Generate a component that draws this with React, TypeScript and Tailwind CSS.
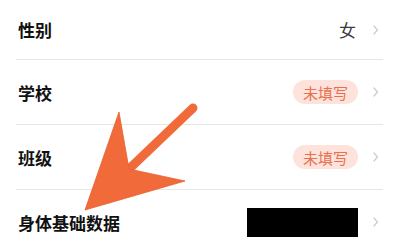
import React from "react";

const Chevron = () => (
  <svg width="6" height="10" viewBox="0 0 6 10" className="ml-[15px] shrink-0">
    <path d="M1 1 L4.5 5 L1 9" fill="none" stroke="#cccccc" strokeWidth="1.2" strokeLinecap="round" strokeLinejoin="round" />
  </svg>
);

const Badge = () => (
  <span className="flex h-[24px] w-[65px] items-center justify-center rounded-full bg-[#fde3db] text-[15px] leading-none text-[#e8704c]">
    未填写
  </span>
);

const Row = ({ label, right, h }: { label: string; right: React.ReactNode; h: string }) => (
  <div className={`flex items-center pl-[18px] pr-[21px] ${h}`}>
    <span className="flex-1 text-[17px] font-bold leading-none text-[#111]">{label}</span>
    {right}
    <Chevron />
  </div>
);

export default function App() {
  return (
    <div
      className="relative h-[243px] w-[400px] overflow-hidden bg-white"
      style={{ fontFamily: '"Noto Sans CJK SC", "Noto Sans", sans-serif' }}
    >
      <Row
        label="性别"
        h="h-[59px]"
        right={<span className="mr-[2px] text-[17px] leading-none text-[#3a3a3a]">女</span>}
      />
      <div className="ml-[16px] mr-[17px] h-px bg-[#e6e6e6]" />
      <Row label="学校" h="h-[64px]" right={<Badge />} />
      <div className="ml-[16px] mr-[17px] h-px bg-[#e6e6e6]" />
      <Row label="班级" h="h-[64px]" right={<Badge />} />
      <div className="ml-[16px] mr-[17px] h-px bg-[#e6e6e6]" />
      <Row
        label="身体基础数据"
        h="h-[64px]"
        right={<span className="h-[29px] w-[111px] bg-black" />}
      />
      <svg className="pointer-events-none absolute left-0 top-0" width="400" height="243" viewBox="0 0 400 243">
        <line x1="193" y1="108" x2="128" y2="170" stroke="#f06a3a" strokeWidth="9" strokeLinecap="round" />
        <polygon points="85,210 119,112 129,169 185,181" fill="#f06a3a" stroke="#e5622f" strokeWidth="0.8" strokeLinejoin="round" />
      </svg>
    </div>
  );
}
